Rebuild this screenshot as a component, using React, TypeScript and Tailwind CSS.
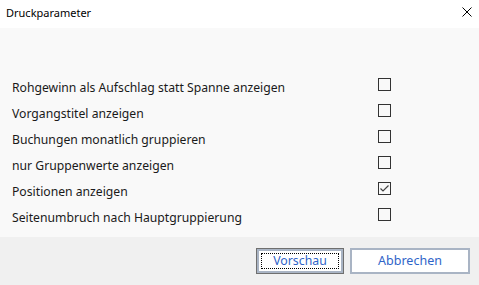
import React from "react";

const rows: { label: string; checked: boolean }[] = [
  { label: "Rohgewinn als Aufschlag statt Spanne anzeigen", checked: false },
  { label: "Vorgangstitel anzeigen", checked: false },
  { label: "Buchungen monatlich gruppieren", checked: false },
  { label: "nur Gruppenwerte anzeigen", checked: false },
  { label: "Positionen anzeigen", checked: true },
  { label: "Seitenumbruch nach Hauptgruppierung", checked: false },
];

function Checkbox({ checked }: { checked: boolean }) {
  return (
    <div className="w-[13px] h-[13px] border border-[#333333] bg-[#f9f9f9] shrink-0 flex items-center justify-center">
      {checked && (
        <svg width="11" height="11" viewBox="0 0 11 11">
          <polyline points="1.5,5.5 4,8 9.5,2.5" fill="none" stroke="#444" strokeWidth="1.2" />
        </svg>
      )}
    </div>
  );
}

export default function App() {
  return (
    <div className="w-[479px] h-[285px] flex flex-col bg-white text-[#1a1a1a]" style={{ fontFamily: '"Noto Sans", "Open Sans", sans-serif' }}>
      <div className="h-[28px] flex items-start justify-between pl-[6px] pr-[7px] bg-white">
        <span className="text-[11px] text-black leading-[14px] pt-[6px]">Druckparameter</span>
        <svg width="10" height="10" viewBox="0 0 10 10" className="mt-[7px]">
          <path d="M0.5 0.5 L9.5 9.5 M9.5 0.5 L0.5 9.5" stroke="#000" strokeWidth="1" />
        </svg>
      </div>
      <div className="h-[209px] bg-[#f9f9f9] pt-[50px]">
        {rows.map((r) => (
          <div key={r.label} className="h-[26px] flex items-start">
            <div className="w-[378px] pl-[12px] pt-[1px] text-[12.2px] leading-[18px] whitespace-nowrap">{r.label}</div>
            <Checkbox checked={r.checked} />
          </div>
        ))}
      </div>
      <div className="flex-1 bg-[#f0f0f0] flex justify-end items-start pt-[11px] pr-[9px] gap-[6px]">
        <button className="relative w-[88px] h-[26px] border border-[#6f6f6f] bg-white shadow-[inset_0_0_0_2px_#a9b4c4] text-[12.3px] text-[#2f64c8] flex items-center justify-center">
          <span className="absolute inset-[4px] border border-dotted border-black"></span>
          <span className="relative">Vorschau</span>
        </button>
        <button className="w-[120px] h-[26px] border-2 border-[#a9b4c4] bg-white text-[12.5px] text-[#2f64c8] flex items-center justify-center">
          Abbrechen
        </button>
      </div>
    </div>
  );
}
